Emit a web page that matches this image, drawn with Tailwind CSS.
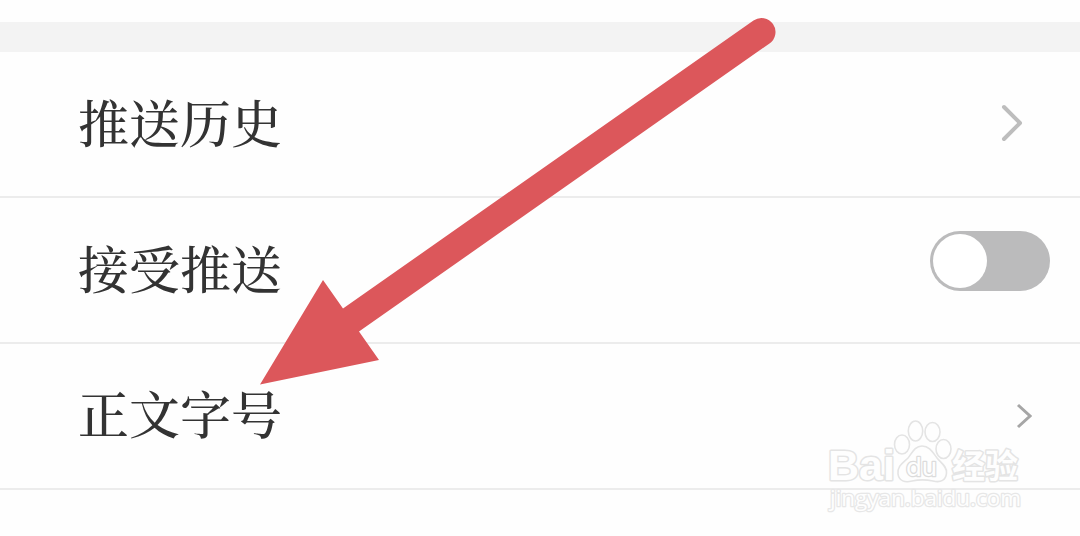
<!DOCTYPE html>
<html lang="zh-CN">
<head>
    <meta charset="UTF-8">
    <meta name="viewport" content="width=device-width, initial-scale=1.0">
    <title>推送设置</title>
    <script src="https://cdn.jsdelivr.net/npm/@tailwindcss/browser@4"></script>
</head>
<body class="bg-[#fefefe]">

    <div class="relative w-[1080px] h-[536px] overflow-hidden pt-[22px] text-[#333333] text-[51px] leading-none font-['Noto_Serif_CJK_SC','Noto_Sans_CJK_SC',serif]">
        <div class="h-[30px] bg-[#f3f3f3]"></div>

        <!-- Settings list -->
        <ul>
            <li class="flex items-center justify-between h-[146px] pl-[78px] pr-[57px] border-b-2 border-[#ececec]">
                <span class="font-medium pb-1.5">推送历史</span>
                <svg class="w-6 h-10" viewBox="0 0 24 40" fill="none" stroke="#bdbdbd" stroke-width="4" stroke-linecap="round" stroke-linejoin="round">
                    <path d="M5 3L21 19L5 35"/>
                </svg>
            </li>
            <li class="flex items-center justify-between h-[146px] pl-[78px] pr-[30px] border-b-2 border-[#ececec]">
                <span class="font-medium pb-1.5">接受推送</span>
                <button class="w-[120px] h-[60px] mb-[19px] p-[3px] rounded-full bg-[#bbbbbc]">
                    <span class="block size-[54px] rounded-full bg-white"></span>
                </button>
            </li>
            <li class="flex items-center justify-between h-[146px] pl-[78px] pr-12 border-b-2 border-[#ececec]">
                <span class="font-medium pb-[7px]">正文字号</span>
                <svg class="w-4 h-7" viewBox="0 0 16 28" fill="none" stroke="#a6a6a6" stroke-width="3">
                    <path d="M2 3L14 14L2 25"/>
                </svg>
            </li>
        </ul>

        <!-- Watermark -->
        <svg class="absolute left-[820px] top-[410px] w-[210px] h-[110px]" viewBox="0 0 210 110" fill="#fefefe" stroke="#e4e4e4" stroke-width="1.6" stroke-linejoin="round">
            <text x="8" y="70" font-family="Liberation Sans" font-weight="700" font-size="43" textLength="67" lengthAdjust="spacingAndGlyphs" paint-order="stroke" stroke-width="3">Bai</text>
            <ellipse cx="82" cy="34.500" rx="7.500" ry="9.500"/>
            <ellipse cx="95.500" cy="21" rx="7.200" ry="10"/>
            <ellipse cx="112.500" cy="22" rx="7.500" ry="9.500"/>
            <ellipse cx="123.500" cy="39" rx="7.500" ry="9.500"/>
            <path d="M102 36C95 36 92 43 88 48C83 53 77 56 78 64C79 71 85 73 92 71C99 69.500 106 69.500 113 71C121 73 126 70 126.500 63C127 56 121 53 117 48C113 43 110 36 102 36Z"/>
            <text x="86" y="65.500" font-family="Inter" font-size="25" textLength="31" lengthAdjust="spacingAndGlyphs" paint-order="stroke" stroke="#dcdcdc" stroke-width="2.500">du</text>
            <text x="132" y="67.500" font-family="Noto Sans CJK SC" font-weight="700" font-size="33" textLength="66" lengthAdjust="spacingAndGlyphs" paint-order="stroke" stroke-width="3">经验</text>
            <text x="10" y="96" font-family="Open Sans" font-weight="500" font-size="22" textLength="191" lengthAdjust="spacingAndGlyphs" paint-order="stroke" stroke="#e7e7e7" stroke-width="2.500">jingyan.baidu.com</text>
        </svg>

        <!-- Pointer arrow -->
        <svg class="absolute inset-0 w-[1080px] h-[536px]" viewBox="0 0 1080 536" fill="#dc575b">
            <path d="M260 384.500L323 280L343 308.500L753.500 20.500A14 14 0 0 1 769.500 43.500L359 331.500L379 360Z"/>
        </svg>
    </div>

</body>
</html>
